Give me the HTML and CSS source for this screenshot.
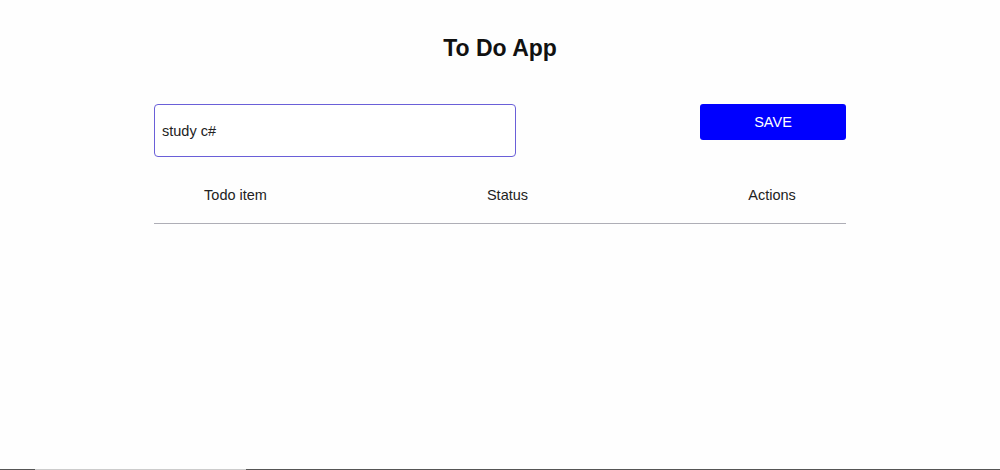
FILE: index.html
```html
<!DOCTYPE html>
<html lang="en">
<head>
<meta charset="utf-8">
<title>To Do App</title>
<link rel="stylesheet" href="styles.css">
</head>
<body>
<main class="app">
  <h1 class="title">To Do App</h1>
  <div class="form-row">
    <input class="todo-input" type="text" value="study c#">
    <button class="save-btn" type="button">SAVE</button>
  </div>
  <div class="table-head">
    <div class="th">Todo item</div>
    <div class="th">Status</div>
    <div class="th">Actions</div>
  </div>
</main>
<div class="bottom-bar"><span class="seg-light"></span></div>
</body>
</html>
```
FILE: styles.css
```css
html, body {
  margin: 0;
  padding: 0;
  background: #fefefe;
}
body {
  font-family: "Liberation Sans", Arial, sans-serif;
  color: #222;
}
.app {
  width: 692px;
  margin: 0 auto;
  padding-top: 35px;
}
.title {
  margin: 0;
  text-align: center;
  font-size: 23px;
  line-height: 26px;
  font-weight: bold;
  color: #111;
}
.form-row {
  margin-top: 43px;
  display: flex;
  justify-content: space-between;
  align-items: flex-start;
}
.todo-input {
  box-sizing: border-box;
  width: 362px;
  height: 53px;
  border: 1px solid #6a5fd8;
  border-radius: 4px;
  padding: 0 7px;
  font-family: "Liberation Sans", Arial, sans-serif;
  font-size: 14.5px;
  color: #222;
  background: #fff;
  outline: none;
}
.save-btn {
  box-sizing: border-box;
  width: 146px;
  height: 36px;
  border: none;
  border-radius: 3px;
  background: #0000ff;
  color: #fff;
  font-family: "Liberation Sans", Arial, sans-serif;
  font-size: 14.5px;
  padding: 0;
  cursor: pointer;
}
.table-head {
  display: grid;
  grid-template-columns: 163px 381px 148px;
  padding: 30px 0 19px;
  border-bottom: 1px solid #aeaeb6;
}
.th {
  text-align: center;
  font-size: 14.5px;
  line-height: 17px;
  color: #222;
}
.bottom-bar {
  position: fixed;
  left: 0;
  right: 0;
  bottom: 0;
  height: 1px;
  background: #555;
}
.seg-light {
  display: block;
  margin-left: 35px;
  width: 211px;
  height: 1px;
  background: #ccc;
}
```
